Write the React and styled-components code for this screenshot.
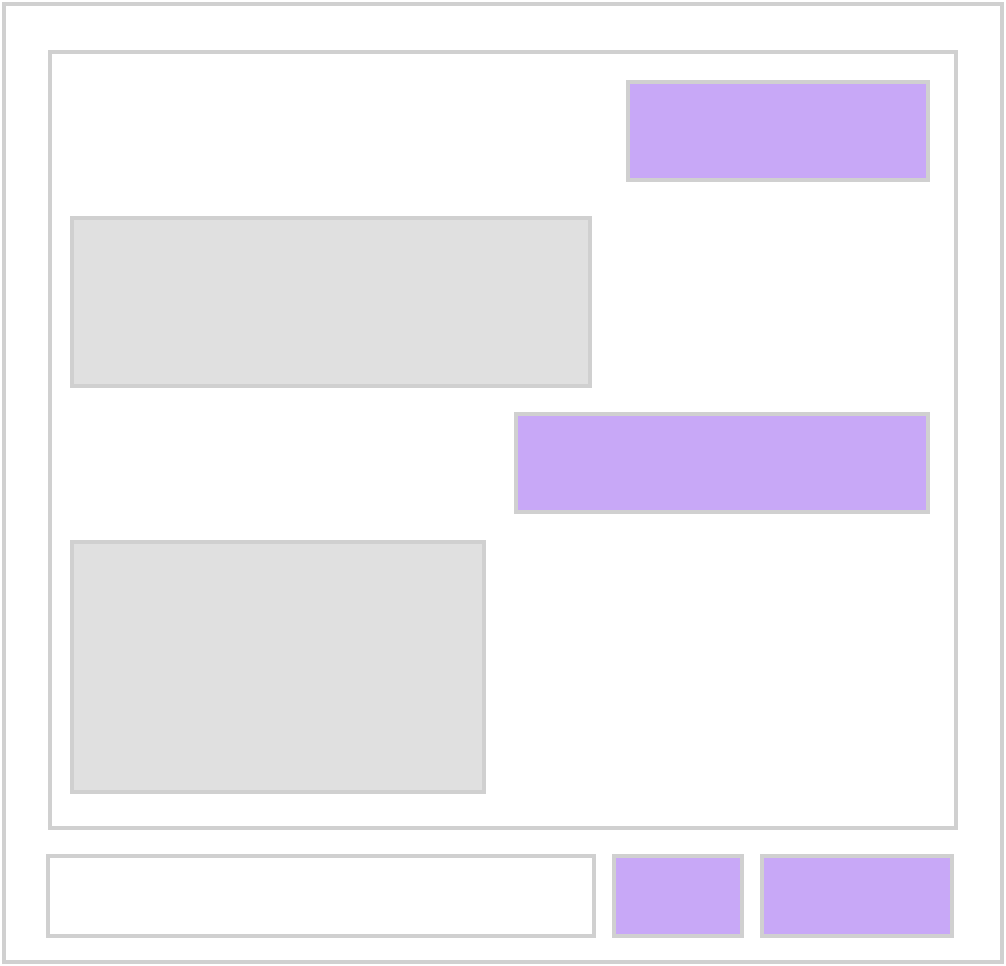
import React from 'react';
import styled, { createGlobalStyle } from 'styled-components';

const GlobalStyle = createGlobalStyle`
    * { box-sizing: border-box; }
    body {
        margin: 0;
        background: #ffffff;
        font-family: "Liberation Sans", Arial, sans-serif;
    }
`;

const line = '#d0d0d0';
const purple = '#c8a8f7';
const grey = '#e0e0e0';

const Frame = styled.div`
    margin: 2px;
    width: 1002px;
    height: 962px;
    border: 4px solid ${line};
    padding: 44px 42px 0 40px;
    display: flex;
    flex-direction: column;
`;

const ChatPanel = styled.div`
    margin-left: 2px;
    height: 780px;
    border: 4px solid ${line};
    padding: 26px 24px 0 18px;
    display: flex;
    flex-direction: column;
`;

const Bubble = styled.div`
    width: ${p => p.$w}px;
    height: ${p => p.$h}px;
    margin-top: ${p => p.$top || 0}px;
    align-self: ${p => (p.$mine ? 'flex-end' : 'flex-start')};
    background: ${p => (p.$mine ? purple : grey)};
    border: 4px solid ${line};
`;

const Composer = styled.div`
    margin-top: 24px;
    margin-right: 4px;
    display: flex;
    gap: 16px;
    height: 84px;
`;

const Input = styled.div`
    width: 550px;
    border: 4px solid ${line};
    background: #ffffff;
`;

const Button = styled.div`
    width: ${p => p.$w}px;
    border: 4px solid ${line};
    background: ${purple};
`;

const messages = [
    { mine: true, w: 304, h: 102, top: 0 },
    { mine: false, w: 522, h: 172, top: 34 },
    { mine: true, w: 416, h: 102, top: 24 },
    { mine: false, w: 416, h: 254, top: 26 },
];

export default function App() {
    return (
        <>
            <GlobalStyle />
            <Frame>
                <ChatPanel>
                    {messages.map((m, i) => (
                        <Bubble key={i} $mine={m.mine} $w={m.w} $h={m.h} $top={m.top} />
                    ))}
                </ChatPanel>
                <Composer>
                    <Input />
                    <Button $w={132} />
                    <Button $w={194} />
                </Composer>
            </Frame>
        </>
    );
}
